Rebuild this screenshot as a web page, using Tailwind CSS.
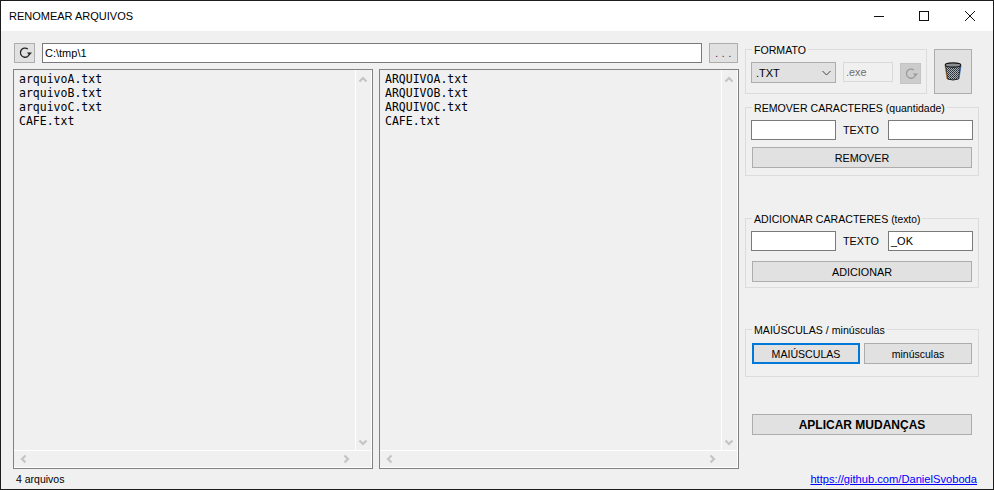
<!DOCTYPE html>
<html lang="en">
  <head>
    <meta charset="UTF-8" />
    <script src="https://cdn.jsdelivr.net/npm/@tailwindcss/browser@4"></script>
    <title>Renomear Arquivos</title>
  </head>
  <body class="w-[994px] h-[490px] overflow-hidden bg-[#f0f0f0] font-['Liberation_Sans',sans-serif] text-[10.8px] leading-[14px] text-black">
    <div class="w-[994px] h-[490px] flex flex-col border border-[#1c1c1c]">
      <!-- title bar -->
      <div class="h-[30px] shrink-0 bg-white flex items-center justify-between pl-[8px]">
        <span class="text-[11px]">RENOMEAR ARQUIVOS</span>
        <div class="flex items-center">
          <div class="w-[46px] h-[30px] flex items-center justify-center">
            <svg width="12" height="12" viewBox="0 0 12 12"><path d="M2 6.5H12" stroke="#111" stroke-width="1" /></svg>
          </div>
          <div class="w-[46px] h-[30px] flex items-center justify-center">
            <svg width="12" height="12" viewBox="0 0 12 12"><rect x="1.5" y="1.5" width="9" height="9" fill="none" stroke="#111" stroke-width="1" /></svg>
          </div>
          <div class="w-[46px] h-[30px] flex items-center justify-center">
            <svg width="12" height="12" viewBox="0 0 12 12"><path d="M1 1L11 11M11 1L1 11" stroke="#111" stroke-width="1" /></svg>
          </div>
        </div>
      </div>

      <div class="flex-1 flex pl-[12px]">
        <!-- left column -->
        <div class="w-[726px] pt-[12px] flex flex-col">
          <div class="h-[20px] flex pl-px">
            <button class="w-[21px] h-[20px] bg-[#e1e1e1] border border-[#adadad] flex items-center justify-center">
              <svg width="14" height="14" viewBox="0 0 14 14"><path d="M9.8 3A4.6 4.6 0 1 0 11.6 7" fill="none" stroke="#222" stroke-width="1.3" /><path d="M8.8 6.4H14L11.6 9.2Z" fill="#222" /></svg>
            </button>
            <div class="w-[660px] ml-[7px] h-[20px] bg-white border border-[#7a7a7a] pl-[2px] leading-[18px] text-[11px]">C:\tmp\1</div>
            <button class="w-[29px] ml-[7px] h-[20px] bg-[#e1e1e1] border border-[#adadad] text-[#5a005a] leading-[20px] text-[10px] tracking-[0.5px]">. . .</button>
          </div>

          <div class="flex gap-[6px] mt-[6px]">
            <div class="w-[360px] h-[400px] border border-[#828282] flex flex-col font-['DejaVu_Sans_Mono',monospace] text-[11.5px]">
              <div class="flex-1 flex border-r border-white">
                <div class="flex-1 pl-[5px] pt-[2px]">
                  <p>arquivoA.txt</p>
                  <p>arquivoB.txt</p>
                  <p>arquivoC.txt</p>
                  <p>CAFE.txt</p>
                </div>
                <div class="w-[16px] border-l border-white flex flex-col items-center justify-between pt-[6px] pb-[4px] pr-[2px]">
                  <svg width="10" height="7" viewBox="0 0 10 7"><path d="M1.5 5.5L5 2L8.5 5.5" fill="none" stroke="#c4c4c4" stroke-width="2.2" /></svg>
                  <svg width="10" height="7" viewBox="0 0 10 7"><path d="M1.5 1.5L5 5L8.5 1.5" fill="none" stroke="#c4c4c4" stroke-width="2.2" /></svg>
                </div>
              </div>
              <div class="h-[18px] border-t border-b border-r border-white flex items-center justify-between pl-[6px] pr-[21px]">
                <svg width="7" height="10" viewBox="0 0 7 10"><path d="M5.5 1.5L2 5L5.5 8.5" fill="none" stroke="#c4c4c4" stroke-width="2.2" /></svg>
                <svg width="7" height="10" viewBox="0 0 7 10"><path d="M1.5 1.5L5 5L1.5 8.5" fill="none" stroke="#c4c4c4" stroke-width="2.2" /></svg>
              </div>
            </div>
            <div class="w-[360px] h-[400px] border border-[#828282] flex flex-col font-['DejaVu_Sans_Mono',monospace] text-[11.5px]">
              <div class="flex-1 flex border-r border-white">
                <div class="flex-1 pl-[5px] pt-[2px]">
                  <p>ARQUIVOA.txt</p>
                  <p>ARQUIVOB.txt</p>
                  <p>ARQUIVOC.txt</p>
                  <p>CAFE.txt</p>
                </div>
                <div class="w-[16px] border-l border-white flex flex-col items-center justify-between pt-[6px] pb-[4px] pr-[2px]">
                  <svg width="10" height="7" viewBox="0 0 10 7"><path d="M1.5 5.5L5 2L8.5 5.5" fill="none" stroke="#c4c4c4" stroke-width="2.2" /></svg>
                  <svg width="10" height="7" viewBox="0 0 10 7"><path d="M1.5 1.5L5 5L8.5 1.5" fill="none" stroke="#c4c4c4" stroke-width="2.2" /></svg>
                </div>
              </div>
              <div class="h-[18px] border-t border-b border-r border-white flex items-center justify-between pl-[6px] pr-[21px]">
                <svg width="7" height="10" viewBox="0 0 7 10"><path d="M5.5 1.5L2 5L5.5 8.5" fill="none" stroke="#c4c4c4" stroke-width="2.2" /></svg>
                <svg width="7" height="10" viewBox="0 0 7 10"><path d="M1.5 1.5L5 5L1.5 8.5" fill="none" stroke="#c4c4c4" stroke-width="2.2" /></svg>
              </div>
            </div>
          </div>

          <p class="pl-[3px] mt-[3px] text-[10.5px]">4 arquivos</p>
        </div>

        <!-- right column -->
        <div class="w-[234px] ml-[6px] pt-[12px] flex flex-col">
          <div class="flex gap-[7px]">
            <fieldset class="w-[182px] h-[51px] border border-[#dcdcdc] px-[5px] pt-[6px] min-w-0">
              <legend class="ml-px px-[2px] leading-[13px] text-[10.6px] translate-y-px">FORMATO</legend>
              <div class="flex">
                <div class="w-[85px] h-[21px] bg-[#e1e1e1] border border-[#adadad] flex items-center justify-between pl-[4px] pr-[4px]">
                  <span class="text-[11px]">.TXT</span>
                  <svg width="9" height="6" viewBox="0 0 9 6"><path d="M0.5 1L4.5 5L8.5 1" fill="none" stroke="#444" stroke-width="1" /></svg>
                </div>
                <div class="w-[50px] h-[20px] ml-[7px] bg-[#f0f0f0] border border-[#d9d9d9] text-[#6d6d6d] pl-[2px] leading-[18px]">.exe</div>
                <button class="w-[21px] h-[21px] ml-[7px] mt-px bg-[#cccccc] border border-[#c4c4c4] flex items-center justify-center">
                  <svg width="14" height="14" viewBox="0 0 14 14"><path d="M9.8 3A4.6 4.6 0 1 0 11.6 7" fill="none" stroke="#9a9a9a" stroke-width="1.3" /><path d="M8.8 6.4H14L11.6 9.2Z" fill="#9a9a9a" /></svg>
                </button>
              </div>
            </fieldset>
            <button class="w-[38px] h-[45px] mt-[6px] pr-px bg-[#e1e1e1] border border-[#adadad] flex items-center justify-center">
              <svg width="18" height="19" viewBox="0 0 18 19">
                <defs>
                  <pattern id="mesh" width="2" height="2" patternUnits="userSpaceOnUse">
                    <rect width="2" height="2" fill="#a9b4bc" />
                    <rect width="1" height="1" fill="#23272d" />
                    <rect x="1" y="1" width="1" height="1" fill="#3d444c" />
                  </pattern>
                </defs>
                <path d="M1.5 3.5L3.5 17Q9 19 14.5 17L16.5 3.5Z" fill="url(#mesh)" stroke="#222" stroke-width="1" />
                <path d="M1 4L3 17" fill="none" stroke="#b5752c" stroke-width="0.7" />
                <path d="M17 4L15 17" fill="none" stroke="#2c66b5" stroke-width="0.7" />
                <ellipse cx="9" cy="3" rx="7.8" ry="2.1" fill="#8a8e92" stroke="#111" stroke-width="1.1" />
              </svg>
            </button>
          </div>

          <fieldset class="h-[75px] mt-[7px] border border-[#dcdcdc] px-[5px] pt-[6px] min-w-0">
            <legend class="ml-px px-[2px] leading-[13px] text-[10.6px] translate-y-px">REMOVER CARACTERES <span class="text-[10.5px]">(quantidade)</span></legend>
            <div class="flex items-center">
              <div class="w-[85px] h-[20px] bg-white border border-[#7a7a7a]"></div>
              <span class="w-[45px] ml-[7px]">TEXTO</span>
              <div class="w-[85px] h-[20px] bg-white border border-[#7a7a7a]"></div>
            </div>
            <button class="block w-[220px] h-[21px] mt-[7px] ml-px bg-[#e1e1e1] border border-[#adadad]">REMOVER</button>
          </fieldset>

          <fieldset class="h-[76px] mt-[36px] border border-[#dcdcdc] px-[5px] pt-[6px] min-w-0">
            <legend class="ml-px px-[2px] leading-[13px] text-[10.6px] translate-y-px">ADICIONAR CARACTERES <span class="text-[10.3px]">(texto)</span></legend>
            <div class="flex items-center">
              <div class="w-[85px] h-[20px] bg-white border border-[#7a7a7a]"></div>
              <span class="w-[45px] ml-[7px]">TEXTO</span>
              <div class="w-[85px] h-[20px] bg-white border border-[#7a7a7a] pl-[2px] leading-[18px] text-[11px]">_OK</div>
            </div>
            <button class="block w-[220px] h-[21px] mt-[10px] ml-px bg-[#e1e1e1] border border-[#adadad]">ADICIONAR</button>
          </fieldset>

          <fieldset class="h-[54px] mt-[35px] border border-[#dcdcdc] px-[5px] pt-[7px] min-w-0">
            <legend class="ml-px px-[2px] leading-[13px] text-[10.6px] translate-y-px">MAIÚSCULAS / <span class="text-[10.6px]">minúsculas</span></legend>
            <div class="flex gap-[4px] ml-px">
              <button class="w-[108px] h-[21px] bg-[#e1e1e1] border-2 border-[#0078d7] text-[10.6px]">MAIÚSCULAS</button>
              <button class="w-[108px] h-[21px] bg-[#e1e1e1] border border-[#adadad] text-[10.5px]">minúsculas</button>
            </div>
          </fieldset>

          <button class="w-[220px] h-[21px] mt-[37px] ml-[7px] bg-[#e1e1e1] border border-[#adadad] font-bold text-[12px]">APLICAR MUDANÇAS</button>

          <a href="#" class="self-end mt-auto mb-[3px] mr-[2px] text-[#0000ff] underline text-[11.15px]">https://github.com/DanielSvoboda</a>
        </div>
      </div>
    </div>
  </body>
</html>
